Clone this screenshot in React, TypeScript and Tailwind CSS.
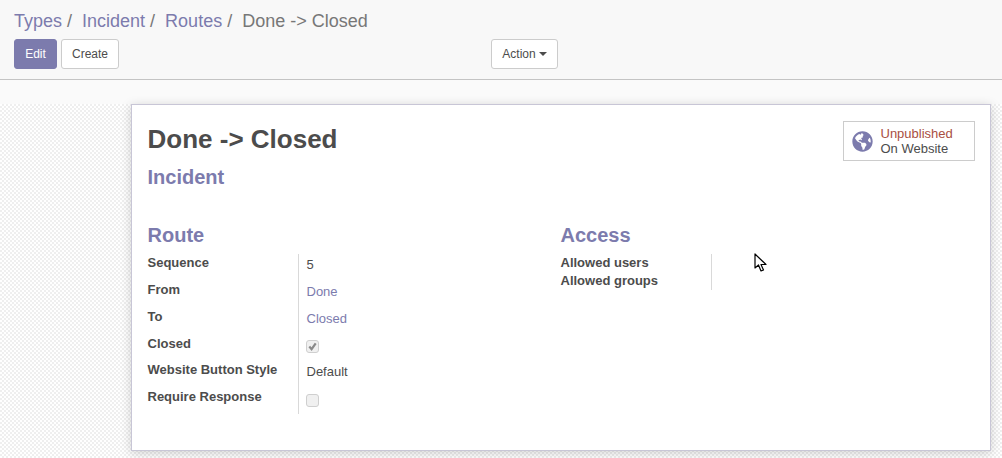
import React from 'react';
import { FaGlobeAmericas } from 'react-icons/fa';

const font = 'font-["Liberation_Sans",Arial,sans-serif]';

function Crumb({ label }: { label: string }) {
  return (
    <>
      <a className="text-[#7c7bad]">{label}</a>
      <span className="ml-[5px] mr-[10px] text-[#777777]">/</span>
    </>
  );
}

function Checkbox({ checked }: { checked?: boolean }) {
  return (
    <div className="-ml-[1px] flex h-[13px] w-[13px] items-center justify-center rounded-[3px] border border-[#cfcfcf] bg-[#f0f0f0]">
      {checked && (
        <svg viewBox="0 0 12 12" className="h-[11px] w-[11px]">
          <path d="M2.5 6 L5 9 L9.5 2.5" fill="none" stroke="#8a8a8a" strokeWidth="2.4" />
        </svg>
      )}
    </div>
  );
}

function Row({ label, h, children }: { label: string; h: string; children: React.ReactNode }) {
  return (
    <div className={`flex ${h}`}>
      <div className="w-[151px] shrink-0 border-r border-[#d9d9d9] text-[13px] leading-[18px] font-bold text-[#4c4c4c]">
        {label}
      </div>
      <div className="flex-1 pl-2 text-[13px] leading-[18px] text-[#4c4c4c]">{children}</div>
    </div>
  );
}

export default function App() {
  return (
    <div className={`${font} relative flex h-[458px] w-[1002px] flex-col overflow-hidden bg-[#f9f9f9]`}>
      {/* Control panel */}
      <div className="h-[80px] shrink-0 border-b border-[#c4c4c4] bg-[#f8f8f8] px-[14px] pt-[10px]">
        <div className="text-[18px] leading-[22px] whitespace-nowrap">
          <Crumb label="Types" />
          <Crumb label="Incident" />
          <Crumb label="Routes" />
          <span className="text-[#777777]">{'Done -> Closed'}</span>
        </div>
        <div className="mt-[7px] flex">
          <button className="h-[30px] w-[43px] rounded-[3px] border border-[#7c7bad] bg-[#7c7bad] text-[12px] text-white">
            Edit
          </button>
          <button className="ml-1 h-[30px] w-[58px] rounded-[3px] border border-[#cccccc] bg-white text-[12px] text-[#4c4c4c]">
            Create
          </button>
          <button className="ml-[372px] flex h-[30px] w-[67px] items-center justify-center rounded-[3px] border border-[#cccccc] bg-white text-[12px] text-[#4c4c4c]">
            Action
            <span className="ml-[3px] h-0 w-0 border-x-4 border-t-4 border-x-transparent border-t-[#4c4c4c]" />
          </button>
        </div>
      </div>

      <div className="h-[24px] shrink-0 bg-[#fafafa]" />

      {/* Sheet background */}
      <div className="flex-1 bg-[repeating-conic-gradient(#efefef_0_25%,#ffffff_0_50%)] bg-[length:4px_4px] pl-[131px]">
        <div className="h-[347px] w-[860px] border border-[#c8c6d6] bg-white pt-[16px] pr-[15px] pl-[15.5px] shadow-[0_2px_10px_rgba(0,0,0,0.18)]">
          <div className="flex justify-between">
            <div>
              <h1 className="pt-[2px] text-[26px] leading-[32px] font-bold text-[#4c4c4c]">{'Done -> Closed'}</h1>
              <h2 className="mt-[10px] text-[20px] leading-[24px] font-bold text-[#7c7bad]">Incident</h2>
            </div>
            <div className="flex h-[40px] w-[132px] items-center gap-[8px] border border-[#cccccc] pl-[7.5px] text-[13px] leading-[15px]">
              <FaGlobeAmericas className="h-[21px] w-[21px] text-[#7c7bad]" />
              <div>
                <div className="text-[#a94f42]">Unpublished</div>
                <div className="text-[#4c4c4c]">On Website</div>
              </div>
            </div>
          </div>

          <div className="mt-[34px] flex">
            <div className="w-[413px]">
              <h3 className="text-[20px] leading-[24px] font-bold text-[#7c7bad]">Route</h3>
              <div className="mt-[7px]">
                <Row label="Sequence" h="h-[27px]"><div className="pt-[2px]">5</div></Row>
                <Row label="From" h="h-[27px]"><div className="pt-[2px] text-[#7c7bad]">Done</div></Row>
                <Row label="To" h="h-[27px]"><div className="pt-[2px] text-[#7c7bad]">Closed</div></Row>
                <Row label="Closed" h="h-[26px]"><div className="pt-[5px]"><Checkbox checked /></div></Row>
                <Row label="Website Button Style" h="h-[27px]"><div className="pt-[2px]">Default</div></Row>
                <Row label="Require Response" h="h-[26px]"><div className="pt-[6px]"><Checkbox /></div></Row>
              </div>
            </div>
            <div className="flex-1">
              <h3 className="text-[20px] leading-[24px] font-bold text-[#7c7bad]">Access</h3>
              <div className="mt-[7px]">
                <Row label="Allowed users" h="h-[18px]"><span /></Row>
                <Row label="Allowed groups" h="h-[18px]"><span /></Row>
              </div>
            </div>
          </div>
        </div>
      </div>

      {/* Mouse pointer from the screenshot */}
      <svg viewBox="0 0 14 20" className="absolute top-[253px] left-[754px] h-[20px] w-[14px]">
        <path d="M1 1 L1 15 L4.5 12 L7 18 L9.5 17 L7 11.5 L12 11.5 Z" fill="#ffffff" stroke="#000000" strokeWidth="1.2" strokeLinejoin="round" />
      </svg>
    </div>
  );
}
